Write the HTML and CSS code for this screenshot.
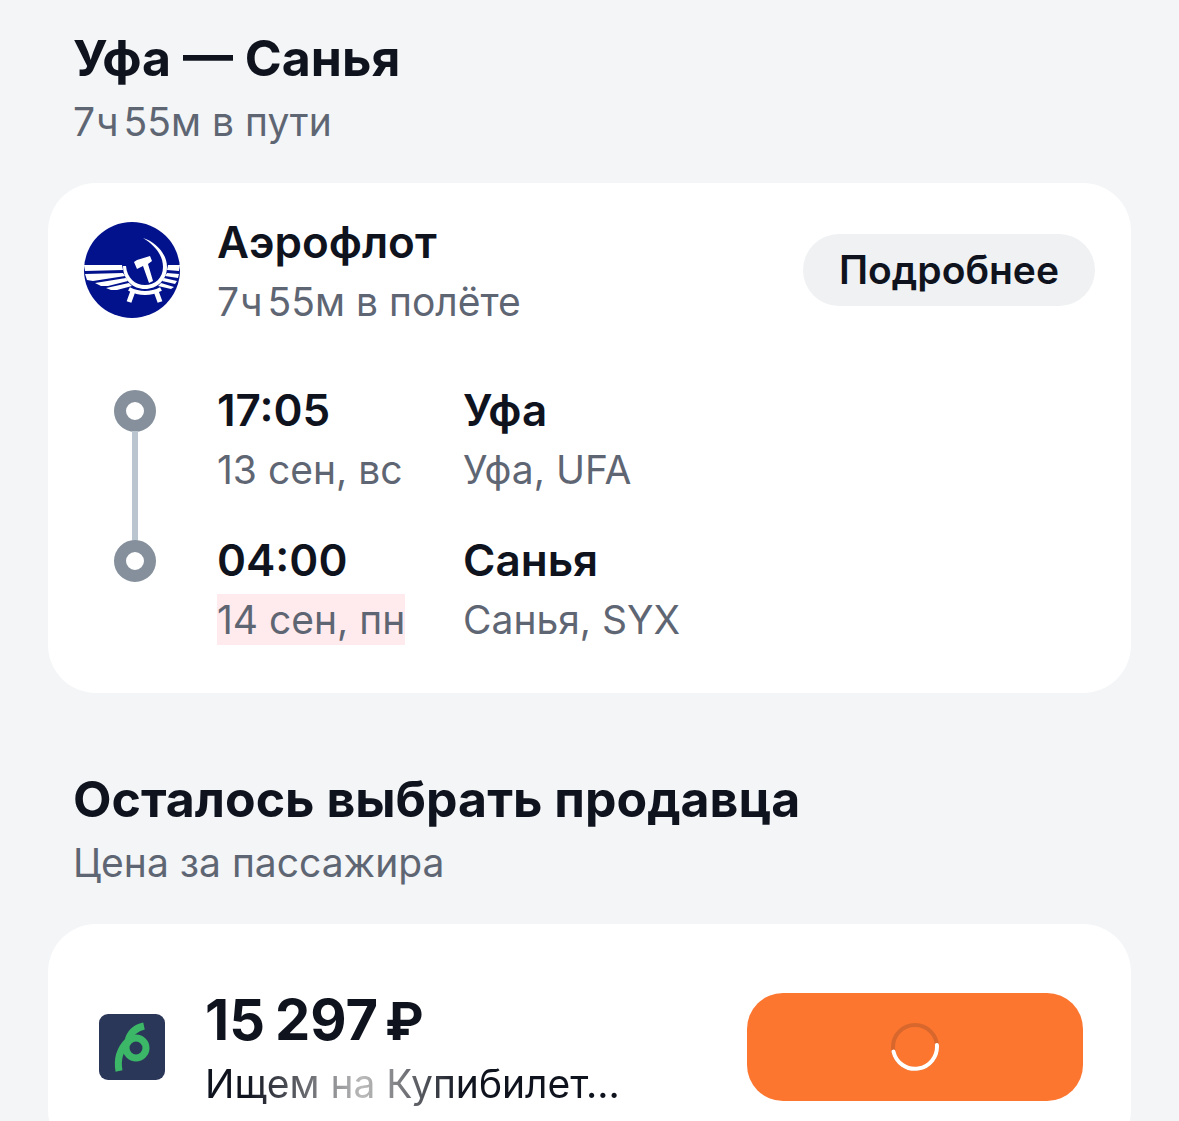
FILE: index.html
```html
<!DOCTYPE html>
<html lang="ru">
<head>
	<meta charset="UTF-8">
	<title>Уфа — Санья</title>
	<link rel="stylesheet" href="styles.css">
</head>
<body>
<main class="ticket">
	<header class="head">
		<h1>Уфа — Санья</h1>
		<p>7<span class="hours">ч</span>55м в пути</p>
	</header>
	<section class="card flight">
		<div class="carrier">
			<svg class="logo" viewBox="0 0 96 96" aria-hidden="true">
				<circle cx="48" cy="48" r="48" fill="#02118c"/>
				<!-- wings -->
				<g fill="#fff">
					<path d="M0 43H38L39 48L1 49ZM1 52L39 51L41 54L9 59L3 58ZM11 61L42 56L44 59L24 64L17 64ZM22 66L45 61L48 64L33 68H27Z"/>
					<path d="M96 43H84L83 48L95 49ZM95 52L83 51L81 54L94 56ZM93 59L80 56L78 59L91 62ZM90 65L77 61L74 64L87 67Z"/>
				</g>
				<!-- sickle -->
				<path d="M59 16C72 20 83 32 83 45C83 58 73 67 61 67C49 67 39 58 39 44H42C43 56 51 63 61 63C71 63 79 56 79 45C79 34 72 24 59 16Z" fill="#fff"/>
				<path d="M45 67Q61 75 77 67" fill="none" stroke="#fff" stroke-width="4"/>
				<path d="M49 69L45 80M72 69L76 80" fill="none" stroke="#fff" stroke-width="5"/>
				<!-- hammer -->
				<path d="M50 40L53 38L66 34L68 39L64 42L69 59L65 61L59 44L53 47Z" fill="#fff"/>
			</svg>
			<div class="info">
				<h2>Аэрофлот</h2>
				<p>7<span class="hours">ч</span>55м в полёте</p>
			</div>
			<button class="more" type="button">Подробнее</button>
		</div>
		<ol class="route">
			<li>
				<span class="dot"></span>
				<div class="time"><b>17:05</b><p>13 сен, вс</p></div>
				<div class="place"><b>Уфа</b><p>Уфа, UFA</p></div>
			</li>
			<li>
				<span class="dot"></span>
				<div class="time"><b>04:00</b><p><mark>14 сен, пн</mark></p></div>
				<div class="place"><b>Санья</b><p>Санья, SYX</p></div>
			</li>
		</ol>
	</section>
	<header class="head sellers">
		<h1>Осталось выбрать продавца</h1>
		<p>Цена за пассажира</p>
	</header>
	<section class="card offer">
		<svg class="agent" viewBox="0 0 66 66" aria-hidden="true">
			<rect width="66" height="66" rx="9" fill="#2b3759"/>
			<g fill="none" stroke="#3bb767" stroke-width="7">
				<path d="M45 12C36 14 31 19 29 27C21 35 18 46 20 57"/>
				<circle cx="37" cy="34" r="10"/>
			</g>
		</svg>
		<div class="price">
			<b>15<span class="thousands">297</span><span class="currency">₽</span></b>
			<p class="searching">Ищем на Купибилет...</p>
		</div>
		<button class="buy" type="button" aria-label="Загрузка">
			<svg viewBox="0 0 48 48" aria-hidden="true">
				<circle cx="24" cy="24" r="22"/>
				<path d="M2.5 28.6A22 22 0 0 0 45.9 22"/>
			</svg>
		</button>
	</section>
</main>
</body>
</html>
```
FILE: styles.css
```css
* {
	box-sizing: border-box;
}
body {
	margin: 0;
	background: #f3f5f7;
	color: #0f131e;
	font-family: Inter, "Noto Sans", sans-serif;
	font-size: 39px;
	line-height: 52px;
}
h1, h2, p, ol {
	margin: 0;
	padding: 0;
}
h1 {
	font-size: 50px;
	line-height: 60px;
	font-weight: 700;
}
h2, .route b {
	display: block;
	font-size: 44px;
	line-height: 60px;
	font-weight: 600;
}
p {
	color: #5f6673;
}
.hours {
	margin: 0 5px 0 1px;
}
.ticket {
	height: 100vh;
	overflow: hidden;
	padding: 28px 48px 0;
}
.head {
	padding: 0 25px;
}
.head p {
	margin-top: 8px;
}
.card {
	margin-top: 35px;
	border-radius: 48px;
	background: #fff;
}
.flight {
	padding: 29px 36px 47px;
}
.carrier {
	display: flex;
	align-items: center;
}
.logo {
	width: 96px;
	height: 96px;
}
.info {
	flex: 1;
	margin-left: 37px;
}
.info p, .route p {
	margin-top: 4px;
}
button {
	border: 0;
	font: inherit;
	cursor: pointer;
}
.more {
	height: 72px;
	padding: 0 36px;
	border-radius: 36px;
	background: #eff1f3;
	color: #0f131e;
	font-weight: 600;
}
.route {
	margin-top: 52px;
	list-style: none;
}
.route li {
	display: grid;
	grid-template-columns: 133px 246px 1fr;
	position: relative;
}
.route li + li {
	margin-top: 34px;
}
.dot {
	width: 42px;
	height: 42px;
	margin: 10px 0 0 30px;
	border: 12px solid #85909c;
	border-radius: 50%;
}
.route li:first-child::before {
	content: "";
	position: absolute;
	left: 48px;
	top: 51px;
	width: 6px;
	height: 110px;
	background: #bac5d0;
}
mark {
	padding: 2px 0;
	background: #ffebed;
	color: inherit;
}
.sellers {
	margin-top: 76px;
}
.offer {
	display: flex;
	align-items: center;
	padding: 60px 48px 48px 51px;
}
.agent {
	width: 66px;
	height: 66px;
}
.price {
	flex: 1;
	margin-left: 40px;
}
.price b {
	display: block;
	font-size: 56px;
	line-height: 72px;
	font-weight: 700;
}
.thousands {
	margin: 0 7px 0 10px;
}
.currency {
	font-size: 52px;
	line-height: 52px;
}
.searching {
	width: fit-content;
	margin-top: 2px;
	background: linear-gradient(90deg, #0f131e 10%, #bbb 38%, #0f131e 62%);
	-webkit-background-clip: text;
	background-clip: text;
	color: transparent;
}
.buy {
	display: flex;
	align-items: center;
	justify-content: center;
	width: 336px;
	height: 108px;
	border-radius: 36px;
	background: #fc7630;
}
.buy svg {
	width: 48px;
	fill: none;
	stroke-width: 4;
	stroke-linecap: round;
}
.buy circle {
	stroke: #d7672c;
}
.buy path {
	stroke: #fff;
}
```
